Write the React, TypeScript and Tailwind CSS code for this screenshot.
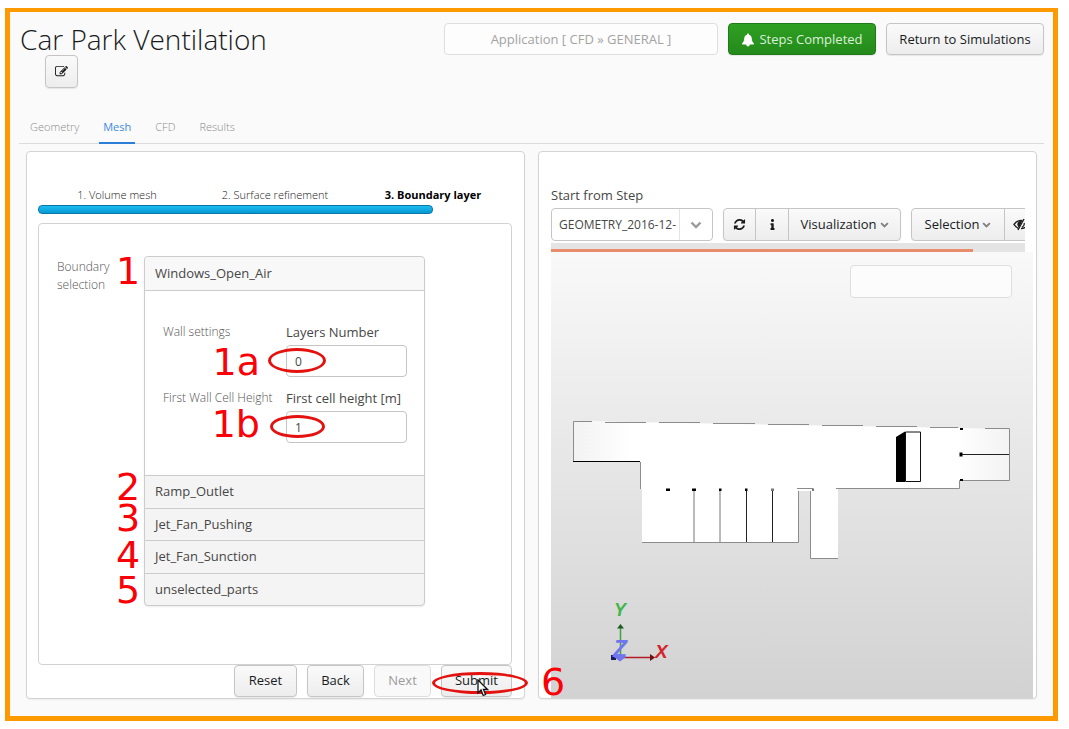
import type { ReactNode } from "react";
import { FaInfo } from "react-icons/fa";

const BUTTON =
  "border border-[#c5c5c5] bg-linear-to-b from-[#fafafa] to-[#ededed] text-[#191b1d] shadow-[0_1px_1px_rgba(0,0,0,0.08)]";

function EditIcon() {
  return (
    <svg viewBox="0 0 1792 1792" className="size-[13px] fill-current" aria-hidden="true">
      <path d="M888 1184l116-116-152-152-116 116v56h96v96h56zm440-720q-16-16-33 1l-350 350q-17 17-1 33t33-1l350-350q17-17 1-33zm80 594v190q0 119-84.5 203.5t-203.5 84.5h-832q-119 0-203.5-84.5t-84.5-203.5v-832q0-119 84.5-203.5t203.5-84.5h832q63 0 117 25 15 7 18 23 3 17-9 29l-49 49q-14 14-32 8-23-6-45-6h-832q-66 0-113 47t-47 113v832q0 66 47 113t113 47h832q66 0 113-47t47-113v-126q0-13 9-22l64-64q15-15 35-7t20 29zm-96-738l288 288-672 672h-288v-288zm444 132l-92 92-288-288 92-92q28-28 68-28t68 28l152 152q28 28 28 68t-28 68z" />
    </svg>
  );
}

function RefreshIcon() {
  return (
    <svg viewBox="0 0 1792 1792" className="size-[13px] fill-current" aria-hidden="true">
      <path d="M1639 1056q0 5-1 7-64 268-268 434.5t-478 166.5q-146 0-282.5-55t-243.5-157l-129 129q-19 19-45 19t-45-19-19-45v-448q0-26 19-45t45-19h448q26 0 45 19t19 45-19 45l-137 137q71 66 161 102t187 36q134 0 250-65t186-179q11-17 53-117 8-23 30-23h192q13 0 22.5 9.5t9.5 22.5zm25-800v448q0 26-19 45t-45 19h-448q-26 0-45-19t-19-45 19-45l138-138q-148-137-349-137-134 0-250 65t-186 179q-11 17-53 117-8 23-30 23h-199q-13 0-22.5-9.5t-9.5-22.5v-7q65-268 270-434.5t480-166.5q146 0 284 55.5t245 156.5l130-129q19-19 45-19t45 19 19 45z" />
    </svg>
  );
}

function BellIcon() {
  return (
    <svg viewBox="0 0 14 14" className="size-[14px] fill-white" aria-hidden="true">
      <path d="M7 0.500C7.700 0.500 8.100 1 8 1.700C9.900 2.200 10.700 3.800 10.800 5.600C10.900 8 11.600 9.300 13 10.500C13 11.100 12.600 11.500 12 11.500H8.800C8.800 12.600 8 13.400 7 13.400S5.200 12.600 5.200 11.500H2C1.400 11.500 1 11.100 1 10.500C2.400 9.300 3.100 8 3.200 5.600C3.300 3.800 4.100 2.200 6 1.700C5.900 1 6.300 0.500 7 0.500z" />
    </svg>
  );
}

function ChevronIcon({ className }: { className: string }) {
  return (
    <svg viewBox="0 0 12 10" className={className} aria-hidden="true">
      <path d="M1.500 2.500L6 7L10.500 2.500" fill="none" stroke="currentColor" strokeWidth="2.400" />
    </svg>
  );
}

function EyeSlashIcon() {
  return (
    <svg viewBox="0 0 16 13" className="h-[13px] w-4" fill="none" stroke="currentColor" aria-hidden="true">
      <path d="M5.500 10.300C3.700 9.600 2.100 8.300 1 6.500C2.600 4 5 2.500 8 2.500C8.500 2.500 9 2.600 9.500 2.700M12 3.500C13.200 4.200 14.200 5.200 15 6.500C13.400 9 11 10.500 8 10.500" strokeWidth="1.400" />
      <path d="M5.800 8.800C4.400 7.400 4.400 4.600 6.600 3.600L8.500 3.200L6 8.800z" fill="currentColor" strokeWidth="1" />
      <path d="M11 1L5 12" strokeWidth="1.300" />
      <path d="M11.200 5C11.500 7 10.500 8.600 9 9.200" strokeWidth="1.200" />
    </svg>
  );
}

/* Red callout number that lies over the form. */
function Callout({ className, children }: { className: string; children: ReactNode }) {
  return (
    <span
      className={`pointer-events-none absolute font-['DejaVu_Sans',sans-serif] text-[38px] leading-none font-normal whitespace-nowrap text-[#fb0007] ${className}`}
    >
      {children}
    </span>
  );
}

function Ring({ className }: { className: string }) {
  return (
    <span className={`pointer-events-none absolute rounded-[50%] border-3 border-[#e3120f] ${className}`} />
  );
}

function Header() {
  return (
    <header className="flex items-start justify-between pl-px">
      <div>
        <h1 className="h-8 text-[28px] leading-8 font-light text-[#191b1d]">Car Park Ventilation</h1>
        <button type="button" aria-label="Edit" className={`ml-[25px] flex size-[33px] items-center justify-center rounded ${BUTTON}`}>
          <EditIcon />
        </button>
      </div>
      <div className="flex gap-[10px]">
        <input
          aria-label="Application"
          readOnly
          value="Application [ CFD » GENERAL ]"
          className="h-8 w-[274px] rounded border border-[#dedede] bg-[#fdfdfd] text-center text-[#a3a3a3] outline-none"
        />
        <button
          type="button"
          className="flex h-8 w-[148px] items-center justify-center gap-[4px] rounded border border-[#1f7a1a] bg-linear-to-b from-[#2fa022] to-[#238a1b] pt-px text-[#dcefdb] shadow-[0_1px_1px_rgba(0,0,0,0.08)]"
        >
          <BellIcon />
          Steps Completed
        </button>
        <button type="button" className={`h-8 w-[158px] rounded pt-px ${BUTTON}`}>
          Return to Simulations
        </button>
      </div>
    </header>
  );
}

const TABS = ["Geometry", "Mesh", "CFD", "Results"];

function Tabs() {
  return (
    <nav className="mt-[21px] flex gap-[16px] border-b border-[#dcdcdc] pl-[7px] text-[11px] font-light">
      {TABS.map((tab) => (
        <a
          key={tab}
          href={`#${tab}`}
          className={
            tab === "Mesh"
              ? "-mb-px h-[35px] border-b-2 border-[#2b7fd6] px-1 leading-[36px] font-normal text-[#3d8add]"
              : "h-[34px] px-1 leading-[36px] text-[#8c8c8c]"
          }
        >
          {tab}
        </a>
      ))}
    </nav>
  );
}

const PARTS = ["Ramp_Outlet", "Jet_Fan_Pushing", "Jet_Fan_Sunction", "unselected_parts"];
const PART_CALLOUTS = ["-top-[8px]", "-top-[10px]", "-top-[5px]", "-top-[3px]"];

function Field(props: {
  id: string;
  caption: string;
  label: string;
  value: string;
  note: string;
  notePlace: string;
  ring: string;
}) {
  return (
    <div className="grid grid-cols-[123px_1fr] leading-[18px]">
      <span className="text-[12px] font-light text-[#555]">{props.caption}</span>
      <div className="relative flex flex-col gap-[4px]">
        <label htmlFor={props.id}>{props.label}</label>
        <input
          id={props.id}
          defaultValue={props.value}
          className="h-8 w-[121px] rounded border border-[#c5c5c5] bg-white px-2 text-[12px] outline-none"
        />
        <Callout className={`right-[147px] ${props.notePlace}`}>{props.note}</Callout>
        <Ring className={props.ring} />
      </div>
    </div>
  );
}

function Accordion() {
  return (
    <div className="w-[281px] rounded border border-[#cccccc] bg-[#f4f4f4] shadow-[0_1px_2px_rgba(0,0,0,0.08)]">
      <button
        type="button"
        className="relative block h-[34px] w-full rounded-t border-b border-[#cccccc] bg-[#f8f8f8] pl-[10px] text-left"
      >
        Windows_Open_Air
        <Callout className="-top-[5px] -left-[29px]">1</Callout>
      </button>
      <div className="flex flex-col gap-[12px] bg-white pt-[32px] pr-[17px] pb-[32px] pl-[18px]">
        <Field
          id="layers"
          caption="Wall settings"
          label="Layers Number"
          value="0"
          note="1a"
          notePlace="top-[20px]"
          ring="top-[25px] -left-[18px] h-[25px] w-[58px]"
        />
        <Field
          id="height"
          caption="First Wall Cell Height"
          label="First cell height [m]"
          value="1"
          note="1b"
          notePlace="top-[16px]"
          ring="top-[26px] -left-[16px] h-[23px] w-[55px]"
        />
      </div>
      <div className="grid h-[130px] auto-rows-fr">
        {PARTS.map((part, i) => (
          <button key={part} type="button" className="relative border-t border-[#cccccc] pl-[10px] text-left">
            {part}
            <Callout className={`-left-[29px] ${PART_CALLOUTS[i]}`}>{i + 2}</Callout>
          </button>
        ))}
      </div>
    </div>
  );
}

function Pointer() {
  return (
    <svg viewBox="0 0 12 18" className="pointer-events-none absolute top-[13px] left-[35px] h-[18px] w-3" aria-hidden="true">
      <path d="M1 1v13l3-3 2.2 5.500 2.400-1L6.400 10.500H10.500z" fill="#fff" stroke="#111" strokeWidth="1.300" />
    </svg>
  );
}

function MeshPanel() {
  return (
    <section className="rounded border border-[#d4d4d4] bg-white pt-[34px] pr-[12px] pl-[11px] shadow-[0_1px_2px_rgba(0,0,0,0.06)]">
      <ol className="grid grid-cols-3 pb-px text-center text-[11px] leading-[18px] text-[#222]">
        <li className="font-light">1. Volume mesh</li>
        <li className="font-light">2. Surface refinement</li>
        <li className="font-bold text-black">3. Boundary layer</li>
      </ol>
      <div className="h-[9px] w-5/6 rounded border border-[#0b75a5] bg-linear-to-b from-[#1cbcf0] to-[#0499d3]" />
      <div className="mt-[9px] flex items-start justify-between rounded border border-[#d2d2d2] pt-[32px] pr-[86px] pb-[58px] pl-[18px]">
        <p className="w-[70px] pt-[2px] text-[12px] leading-[18px] font-light text-[#555]">Boundary selection</p>
        <Accordion />
      </div>
      <div className="flex justify-end gap-[10px]">
        <button type="button" className={`h-8 w-[63px] rounded ${BUTTON}`}>Reset</button>
        <button type="button" className={`h-8 w-[57px] rounded ${BUTTON}`}>Back</button>
        <button type="button" disabled className="h-8 w-[57px] rounded border border-[#dedede] bg-[#f9f9f9] text-[#9b9b9b]">
          Next
        </button>
        <button type="button" className={`relative h-8 w-[71px] rounded ${BUTTON}`}>
          Submit
          <Ring className="top-[6px] -left-[10px] h-[22px] w-[96px]" />
          <Pointer />
          <Callout className="-top-[3px] left-[99px] z-10">6</Callout>
        </button>
      </div>
    </section>
  );
}

function Toolbar() {
  return (
    <div className="mr-[8px] flex gap-[10px] overflow-hidden">
      <div className="relative shrink-0">
        <select
          id="step"
          className="h-[33px] w-[162px] appearance-none rounded border border-[#c5c5c5] bg-white pr-[34px] pl-[7px] text-[12px] text-[#474747] outline-none"
        >
          <option>GEOMETRY_2016-12-</option>
        </select>
        <span className="pointer-events-none absolute inset-y-px right-px flex w-[33px] items-center justify-center border-l border-[#e4e4e4]">
          <ChevronIcon className="h-[10px] w-3 text-[#9a9a9a]" />
        </span>
      </div>
      <div className={`flex h-[33px] shrink-0 divide-x divide-[#c5c5c5] rounded ${BUTTON}`}>
        <button type="button" aria-label="Refresh" className="flex w-8 items-center justify-center">
          <RefreshIcon />
        </button>
        <button type="button" aria-label="Information" className="flex w-[33px] items-center justify-center">
          <FaInfo className="size-[11px]" />
        </button>
        <button type="button" className="flex w-[111px] items-center justify-center gap-[3px]">
          Visualization <ChevronIcon className="h-2 w-[9px] text-[#808080]" />
        </button>
      </div>
      <div className={`flex h-[33px] shrink-0 divide-x divide-[#c5c5c5] rounded ${BUTTON}`}>
        <button type="button" className="flex w-[93px] items-center justify-center gap-[3px]">
          Selection <ChevronIcon className="h-2 w-[9px] text-[#808080]" />
        </button>
        <button type="button" aria-label="Hide" className="flex w-8 items-center justify-center">
          <EyeSlashIcon />
        </button>
      </div>
    </div>
  );
}

/* Plan view of the car park: outline, bays, ramp and axis marker. */
function PlanView() {
  return (
    <svg viewBox="551 252 482 446" className="block w-full" role="img" aria-label="Car park model">
      <defs>
        <linearGradient id="west" x1="573" x2="632" y1="0" y2="0" gradientUnits="userSpaceOnUse">
          <stop offset="0" stopColor="#f2f2f2" />
          <stop offset="1" stopColor="#fff" />
        </linearGradient>
        <linearGradient id="east" x1="955" x2="1009" y1="0" y2="0" gradientUnits="userSpaceOnUse">
          <stop offset="0" stopColor="#fff" />
          <stop offset="1" stopColor="#f3f3f3" />
        </linearGradient>
      </defs>
      <path d="M573 421L960 428V488H838V558H811V491H798V542H642V489H640V461H573z" fill="#fff" />
      <path d="M573 421L640 422.500V461H573z" fill="url(#west)" />
      <path d="M959 428L1009 429V480H959z" fill="url(#east)" />
      <g fill="none" stroke="#8c8c8c" strokeWidth="1">
        <path d="M573.500 461V421.500H592M605 422.500H646M659 422.500H700M713 423.500H755M768 424.500H809M822 425.500H863M876 426.500H917M930 427.500H958" />
        <path d="M640.500 462V489M642 542.500H798.500V491M797 488.500H813M810.500 491V558.500H838M836 488.500H959.500V480.500H1009.500V428.500H985" />
      </g>
      <path d="M573 461.500H640" stroke="#000" />
      <path d="M694 490V542M720 490V542" stroke="#777" />
      <path d="M746.500 490V542M772.500 490V542M961 454.500H1009" stroke="#222" />
      <path d="M666 488.500h4v2.500h-4zM692 488.500h4v2.500h-4zM719 488.500h2.500v2.500h-2.500zM745 488.500h2.500v2.500h-2.500zM959.500 452.500h3v4h-3zM960 428h3v2h-3zM960 479h3v2h-3z" fill="#000" />
      <path d="M771 488.500h3v2.500h-3zM812 488.500h2v2.500h-2z" fill="#777" />
      <path d="M896 437L905 431.500V482H896z" fill="#000" />
      <path d="M905.500 432H920.500V481.500H905.500z" fill="#fff" stroke="#111" />
      <path d="M620.500 656V627" stroke="#3da33d" strokeWidth="1.500" />
      <path d="M617 628.500L620.500 624L624 628.500z" fill="#1d5a22" />
      <path d="M623 657.500H651" stroke="#b21d24" strokeWidth="1.500" />
      <path d="M650 654L655 657.500L650 661z" fill="#6d1115" />
      <path d="M611 655h5v5h-5z" fill="#1a1a55" />
      <path d="M614 657L620 653.500L626 657L620 661.500z" fill="#7075ee" />
      <g fontFamily="Liberation Sans, sans-serif" fontWeight="700" fontStyle="italic">
        <text x="614" y="616" fontSize="18" fill="#43b649">Y</text>
        <text x="613" y="657" fontSize="23" fill="#7075ee">Z</text>
        <text x="655" y="658" fontSize="19" fill="#d5232b">X</text>
      </g>
    </svg>
  );
}

function ViewerPanel() {
  return (
    <section className="min-w-0 rounded border border-[#d4d4d4] bg-white pt-[34px] pr-[3px] pl-[12px] shadow-[0_1px_2px_rgba(0,0,0,0.06)]">
      <label htmlFor="step" className="block pb-[4px] leading-[18px]">
        Start from Step
      </label>
      <Toolbar />
      <div className="mt-[2px] mr-[8px] h-[9px] bg-[#e4e4e4] pt-[6px]">
        <div className="h-[3px] w-[89%] bg-[#e88c6c]" />
      </div>
      <div className="relative bg-linear-to-b from-[#f9f9f9] to-[#d2d2d2]">
        <PlanView />
        <input
          aria-label="Selected part"
          className="absolute top-[13px] right-[21px] h-[33px] w-[162px] rounded border border-[#dedede] bg-[#fcfcfc] px-2 outline-none"
        />
      </div>
    </section>
  );
}

export default function App() {
  return (
    <div className="min-h-screen bg-white pt-2 pr-[11px] pb-[9px] pl-[5px] font-['Open_Sans',sans-serif] text-[13px] text-[#474747]">
      <div className="border-[5px] border-t-4 border-[#ff9900] bg-[#fafafa] px-[9px] pt-[11px] pb-[17px]">
        <Header />
        <Tabs />
        <main className="mt-[7px] grid grid-cols-2 gap-[13px] px-[7px]">
          <MeshPanel />
          <ViewerPanel />
        </main>
      </div>
    </div>
  );
}
